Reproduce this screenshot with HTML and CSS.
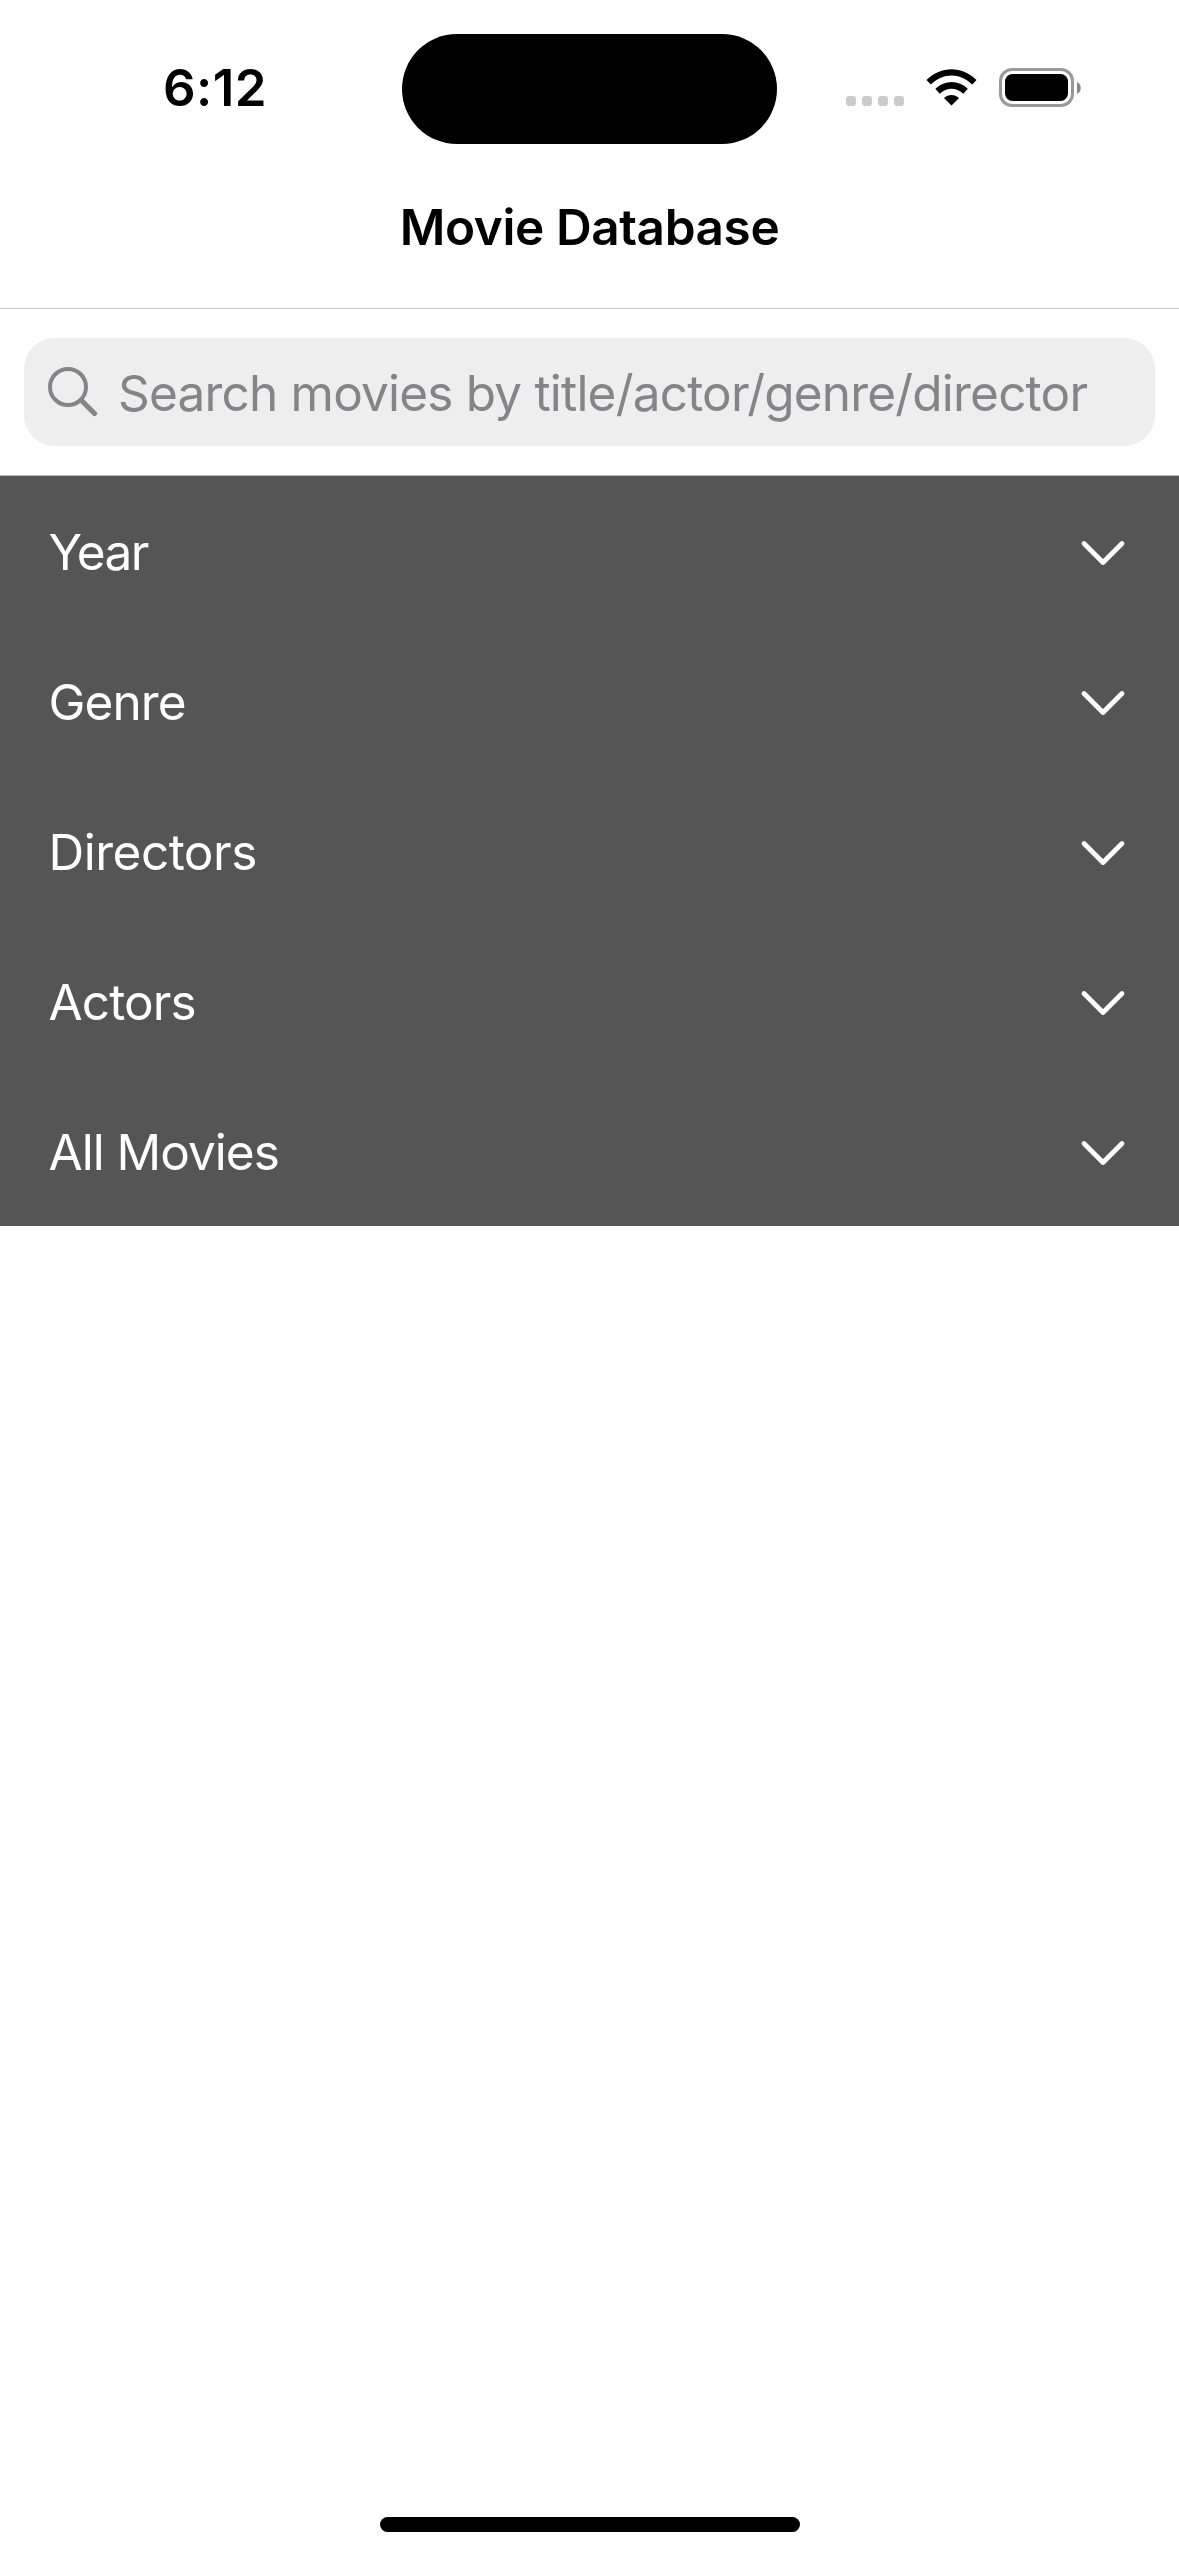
FILE: index.html
```html
<!DOCTYPE html>
<html lang="en">
<head>
<meta charset="utf-8">
<title>Movie Database</title>
<link rel="stylesheet" href="styles.css">
</head>
<body>
<div class="screen">
  <header class="status">
    <time class="clock">6:12</time>
    <div class="island"></div>
    <svg class="indicators" width="240" height="44" viewBox="0 0 240 44">
      <g fill="#cbcbcb"><rect x="1" y="28" width="10" height="10" rx="3.3"/><rect x="17" y="28" width="10" height="10" rx="3.3"/><rect x="33" y="28" width="10" height="10" rx="3.3"/><rect x="49" y="28" width="10" height="10" rx="3.3"/></g>
      <path d="M81.500 12C96 -2.300 117 -2.300 131.500 12L127.300 16.500C114.500 4.500 98.500 4.500 85.800 16.500ZM90.300 20.800C99.800 11.800 113.500 11.800 122.800 20.800L118.300 25.700C111 19 102 19 94.800 25.700ZM99 29.900C103.500 26 109.500 26 114 29.900L106.500 37.600Z"/>
      <rect x="155.500" y="1.500" width="72" height="36" rx="11.500" fill="none" stroke="#999" stroke-width="3"/>
      <rect x="160" y="6" width="63" height="27" rx="7.500"/>
      <path d="M232 14C237 16 237 24 232 26Z" fill="#888"/>
    </svg>
  </header>
  <h1 class="title"><span>Movie Database</span></h1>
  <div class="search-area">
    <label class="search">
      <svg class="search-icon" width="50" height="50" viewBox="0 0 50 50" fill="none" stroke="#858589"><circle cx="20" cy="20" r="18" stroke-width="4"/><path d="M33.500 33.500L46.500 46.500" stroke-width="5.200" stroke-linecap="round"/></svg>
      <span class="placeholder">Search movies by title/actor/genre/director</span>
    </label>
  </div>
  <ul class="categories">
    <li class="row"><span class="year">Year</span><svg class="chevron" width="46" height="28" viewBox="0 0 46 28"><path d="M4 4.500L23 23.500L42 4.500"/></svg></li>
    <li class="row"><span class="genre">Genre</span><svg class="chevron" width="46" height="28" viewBox="0 0 46 28"><path d="M4 4.500L23 23.500L42 4.500"/></svg></li>
    <li class="row"><span class="directors">Directors</span><svg class="chevron" width="46" height="28" viewBox="0 0 46 28"><path d="M4 4.500L23 23.500L42 4.500"/></svg></li>
    <li class="row"><span class="actors">Actors</span><svg class="chevron" width="46" height="28" viewBox="0 0 46 28"><path d="M4 4.500L23 23.500L42 4.500"/></svg></li>
    <li class="row"><span class="all">All Movies</span><svg class="chevron" width="46" height="28" viewBox="0 0 46 28"><path d="M4 4.500L23 23.500L42 4.500"/></svg></li>
  </ul>
  <div class="home"></div>
</div>
</body>
</html>
```
FILE: styles.css
```css
* { box-sizing: border-box; margin: 0; padding: 0; }
body { background: #fff; font-family: Inter, "Liberation Sans", sans-serif; font-size: 49.5px; }
.screen { display: flex; flex-direction: column; width: 1179px; height: 2556px; }
.status { display: grid; grid-template-columns: 402px 375px 1fr; height: 177px; padding-top: 33px; align-items: start; }
.clock { padding: 25px 0 0 163px; line-height: 60px; font-size: 51px; font-weight: 600; letter-spacing: 0.4px; }
.island { height: 110px; margin-top: 1px; border-radius: 55px; background: #000; }
.indicators { margin: 35px 0 0 68px; }
.title { height: 132px; border-bottom: 1px solid #c6c6c8; text-align: center; line-height: 100px; font-size: 49.5px; font-weight: 600; letter-spacing: -0.4px; }
.search-area { height: 167px; padding: 29px 24px 0; border-bottom: 1px solid #bcbcbc; }
.search { display: flex; height: 108px; border-radius: 31px; background: #eee; padding-left: 24px; color: #858589; }
.search-icon { flex: none; margin: 28.500px 0 0; }
.placeholder { margin-left: 20px; line-height: 110px; white-space: nowrap; letter-spacing: -0.8px; }
.categories { list-style: none; background: #555; }
.row { display: flex; justify-content: space-between; height: 150px; padding: 0 53.500px 0 48.500px; color: #fff; line-height: 152px; letter-spacing: -0.9px; }
.year { letter-spacing: -1.6px; }
.directors { letter-spacing: -0.5px; }
.all { letter-spacing: -1px; }
.chevron { margin-top: 63px; fill: none; stroke: #fff; stroke-width: 4.800; stroke-linecap: round; stroke-linejoin: round; }
.home { width: 420px; height: 15px; border-radius: 8px; margin: auto auto 24px; background: #000; }
```
